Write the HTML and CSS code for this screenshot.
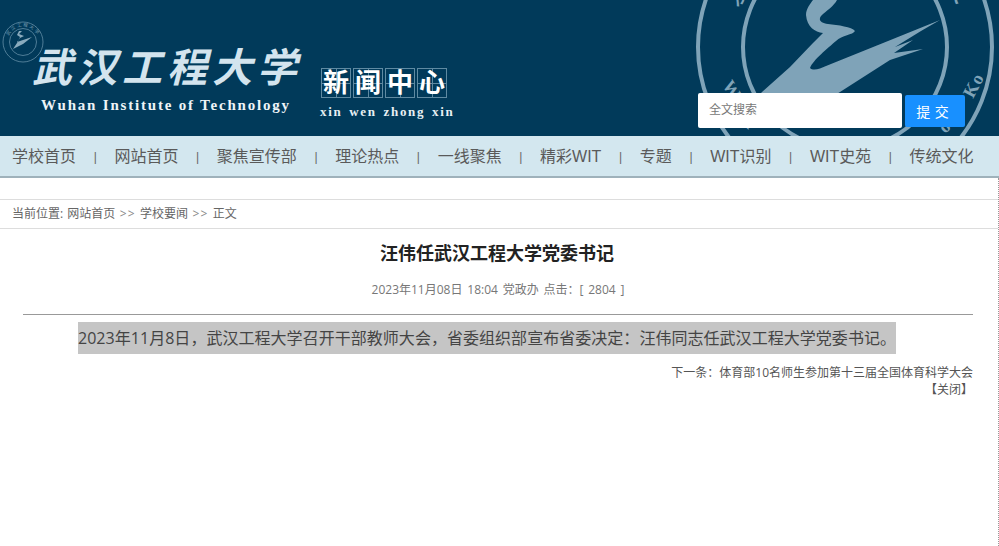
FILE: index.html
```html
<!DOCTYPE html>
<html lang="zh-CN">
<head>
<meta charset="utf-8">
<title>汪伟任武汉工程大学党委书记</title>
<link rel="stylesheet" href="styles.css">
</head>
<body>
<header class="masthead">
  <svg class="seal-big" viewBox="690 0 309 136" aria-hidden="true">
    <circle class="ring" cx="845" cy="47" r="147"/>
    <circle class="ring" cx="845" cy="47" r="102"/>
    <text class="seal-cn" transform="translate(736 7) rotate(-35)">汉</text>
    <text class="seal-cn" transform="translate(944 -6) rotate(35)">大</text>
    <text class="seal-en" transform="translate(722 85) rotate(58)">W</text>
    <text class="seal-en" transform="translate(742 124) rotate(42)">a</text>
    <text class="seal-en" transform="translate(973 99) rotate(-62)">Ko</text>
    <text class="seal-en" transform="translate(945 134) rotate(-42)">o</text>
    <path class="stroke" d="M813 0L837 0C834 6 826 11 821 16C818 20 821 23 828 24C838 25 852 27 855 31C853 35 842 35 836 41C828 48 813 60 810 68C813 71 820 69 826 66L893 39L940 20L921 31L895 47L913 40L894 53L923 49L890 60L840 92L810 110L745 110L762 92L790 67L813 43L823 33C815 32 807 27 806 15C806 9 810 4 813 0Z"/>
  </svg>

  <svg class="seal-small" viewBox="0 0 42 42" aria-hidden="true">
    <defs><path id="smallArc" d="M5.5 21a15.500 15.500 0 0 1 31 0"/></defs>
    <circle class="ring-thin" cx="21" cy="21" r="20"/>
    <circle class="ring-thin" cx="21" cy="21" r="13.5"/>
    <text class="seal-tiny"><textPath href="#smallArc" startOffset="50%" text-anchor="middle">武汉工程大学</textPath></text>
    <path class="stroke" d="M17 10L20 10L17 13L22 15L18 17L15 21L30 16L21 23L11 28L15 22L18 16L15 14Z"/>
  </svg>

  <div class="school">
    <div class="school-name">武汉工程大学</div>
    <div class="school-en">Wuhan Institute of Technology</div>
  </div>

  <div class="section">
    <div class="section-cn">
      <span class="cell">新</span><span class="cell">闻</span><span class="cell">中</span><span class="cell">心</span>
    </div>
    <div class="section-en">xin wen zhong xin</div>
  </div>

  <form class="search">
    <input class="search-input" type="text" placeholder="全文搜索">
    <button class="search-btn" type="button">提 交</button>
  </form>
</header>

<nav class="nav">
  <a>学校首页</a><i>|</i>
  <a>网站首页</a><i>|</i>
  <a>聚焦宣传部</a><i>|</i>
  <a>理论热点</a><i>|</i>
  <a>一线聚焦</a><i>|</i>
  <a>精彩WIT</a><i>|</i>
  <a>专题</a><i>|</i>
  <a>WIT识别</a><i>|</i>
  <a>WIT史苑</a><i>|</i>
  <a>传统文化</a>
</nav>

<main class="main">
  <div class="crumbs">当前位置: 网站首页<span class="arrows">&gt;&gt;</span>学校要闻<span class="arrows">&gt;&gt;</span>正文</div>
  <article class="article">
    <h1 class="title">汪伟任武汉工程大学党委书记</h1>
    <div class="meta">2023年11月08日 18:04 党政办 点击：[ 2804 ]</div>
    <p class="content"><span class="selected">2023年11月8日，武汉工程大学召开干部教师大会，省委组织部宣布省委决定：汪伟同志任武汉工程大学党委书记。</span></p>
    <div class="next">下一条：体育部10名师生参加第十三届全国体育科学大会</div>
    <div class="close">【关闭】</div>
  </article>
</main>
</body>
</html>
```
FILE: styles.css
```css
* { box-sizing: border-box; }
html, body { margin: 0; padding: 0; height: 100%; overflow: hidden; }
body {
  font-family: "Open Sans", "Noto Sans CJK SC", sans-serif;
  background: #fff;
  color: #555;
}

/* masthead */
.masthead {
  position: relative;
  display: flex;
  height: 136px;
  background: #013a5a;
  overflow: hidden;
}
.seal-big { position: absolute; left: 690px; top: 0; width: 309px; height: 136px; }
.seal-small { position: absolute; left: 2px; top: 21px; width: 42px; height: 42px; }
.ring { fill: none; stroke: #7fa3b8; stroke-width: 4; }
.ring-thin { fill: none; stroke: #4f7d97; stroke-width: 1; }
.stroke { fill: #7fa3b8; }
.seal-small .stroke { fill: #8aabbd; }
.seal-tiny { fill: #6f97ad; font-size: 4.5px; letter-spacing: 1.5px; }
.seal-cn { fill: #7fa3b8; font-size: 18px; font-weight: 700; }
.seal-en { fill: #7fa3b8; font-family: "Liberation Serif", serif; font-size: 18px; font-weight: 700; letter-spacing: 1px; }

.school { position: relative; width: 288px; margin-left: 32px; padding-top: 41px; }
.school-name {
  font-size: 40px;
  line-height: 52px;
  font-weight: 700;
  font-style: italic;
  letter-spacing: 5px;
  color: #d3e4ee;
  white-space: nowrap;
}
.school-en {
  margin: 3px 0 0 9px;
  font-family: "Liberation Serif", serif;
  font-size: 15px;
  line-height: 18px;
  font-weight: 700;
  letter-spacing: 1.8px;
  color: #eef4f7;
  white-space: nowrap;
}

.section { position: relative; width: 378px; padding-top: 68px; }
.section-cn { display: flex; gap: 2px; margin-left: 1px; }
.cell {
  width: 30px;
  height: 30px;
  border: 1px solid #5f8aa2;
  background:
    linear-gradient(#5f8aa2, #5f8aa2) center / 1px 100% no-repeat,
    linear-gradient(#5f8aa2, #5f8aa2) center / 100% 1px no-repeat;
  color: #fff;
  font-size: 26px;
  line-height: 27px;
  font-weight: 700;
  text-align: center;
}
.section-en {
  margin-top: 6px;
  font-family: "Liberation Serif", serif;
  font-size: 13px;
  line-height: 16px;
  font-weight: 700;
  letter-spacing: 1.67px;
  word-spacing: 2px;
  color: #e8f0f4;
  white-space: nowrap;
}

.search { position: relative; display: flex; align-items: center; gap: 3px; height: 35px; margin-top: 93px; }
.search-input {
  width: 204px;
  height: 35px;
  padding: 0 11px 2px;
  border: 0;
  border-radius: 2px;
  background: #fff;
  font: 12px "Open Sans", "Noto Sans CJK SC", sans-serif;
  color: #777;
}
.search-input::placeholder { color: #777; opacity: 1; }
.search-btn {
  width: 60px;
  height: 32px;
  padding: 0 5px 0 0;
  border: 0;
  border-radius: 2px;
  background: #1890ff;
  color: #fff;
  font: 14px "Open Sans", "Noto Sans CJK SC", sans-serif;
  word-spacing: 1px;
}

/* nav */
.nav {
  display: flex;
  align-items: center;
  height: 42px;
  padding: 0 0 2px 12px;
  background: #d3e7ef;
  border-bottom: 2px solid #9fb2bb;
  font-family: "Liberation Sans", "Noto Sans CJK SC", sans-serif;
  font-size: 16px;
  color: #5a5a5a;
  white-space: nowrap;
}
.nav i {
  width: 38.4px;
  font-style: normal;
  font-size: 12px;
  text-align: center;
  color: #666;
  padding-top: 3px;
}

/* main */
.main {
  width: 999px;
  height: 368px;
  padding-top: 21px;
  border-right: 1px dotted #999;
}
.crumbs {
  height: 30px;
  padding-left: 12px;
  border-top: 1px solid #ddd;
  border-bottom: 1px solid #ddd;
  font-size: 12px;
  line-height: 28px;
  word-spacing: 1px;
  color: #666;
}
.arrows { margin: 0 4.5px; letter-spacing: 1px; color: #888; }
.article { padding: 0 25px 0 23px; }
.title {
  margin: 10px 2px 0 0;
  font-size: 18px;
  line-height: 28px;
  font-weight: 700;
  color: #222;
  text-align: center;
}
.meta {
  margin-top: 14px;
  padding-bottom: 15px;
  border-bottom: 1px solid #999;
  font-size: 12px;
  line-height: 18px;
  word-spacing: 1.7px;
  color: #777;
  text-align: center;
}
.content { margin: 7px 0 0; padding-left: 55px; font-size: 16px; line-height: 32px; letter-spacing: .036px; color: #444; }
.selected { display: inline-block; background: #c5c5c5; white-space: nowrap; }
.next { margin-top: 10px; font-size: 12px; line-height: 18px; color: #555; text-align: right; }
.close { font-size: 12px; line-height: 16px; color: #555; text-align: right; }
```
